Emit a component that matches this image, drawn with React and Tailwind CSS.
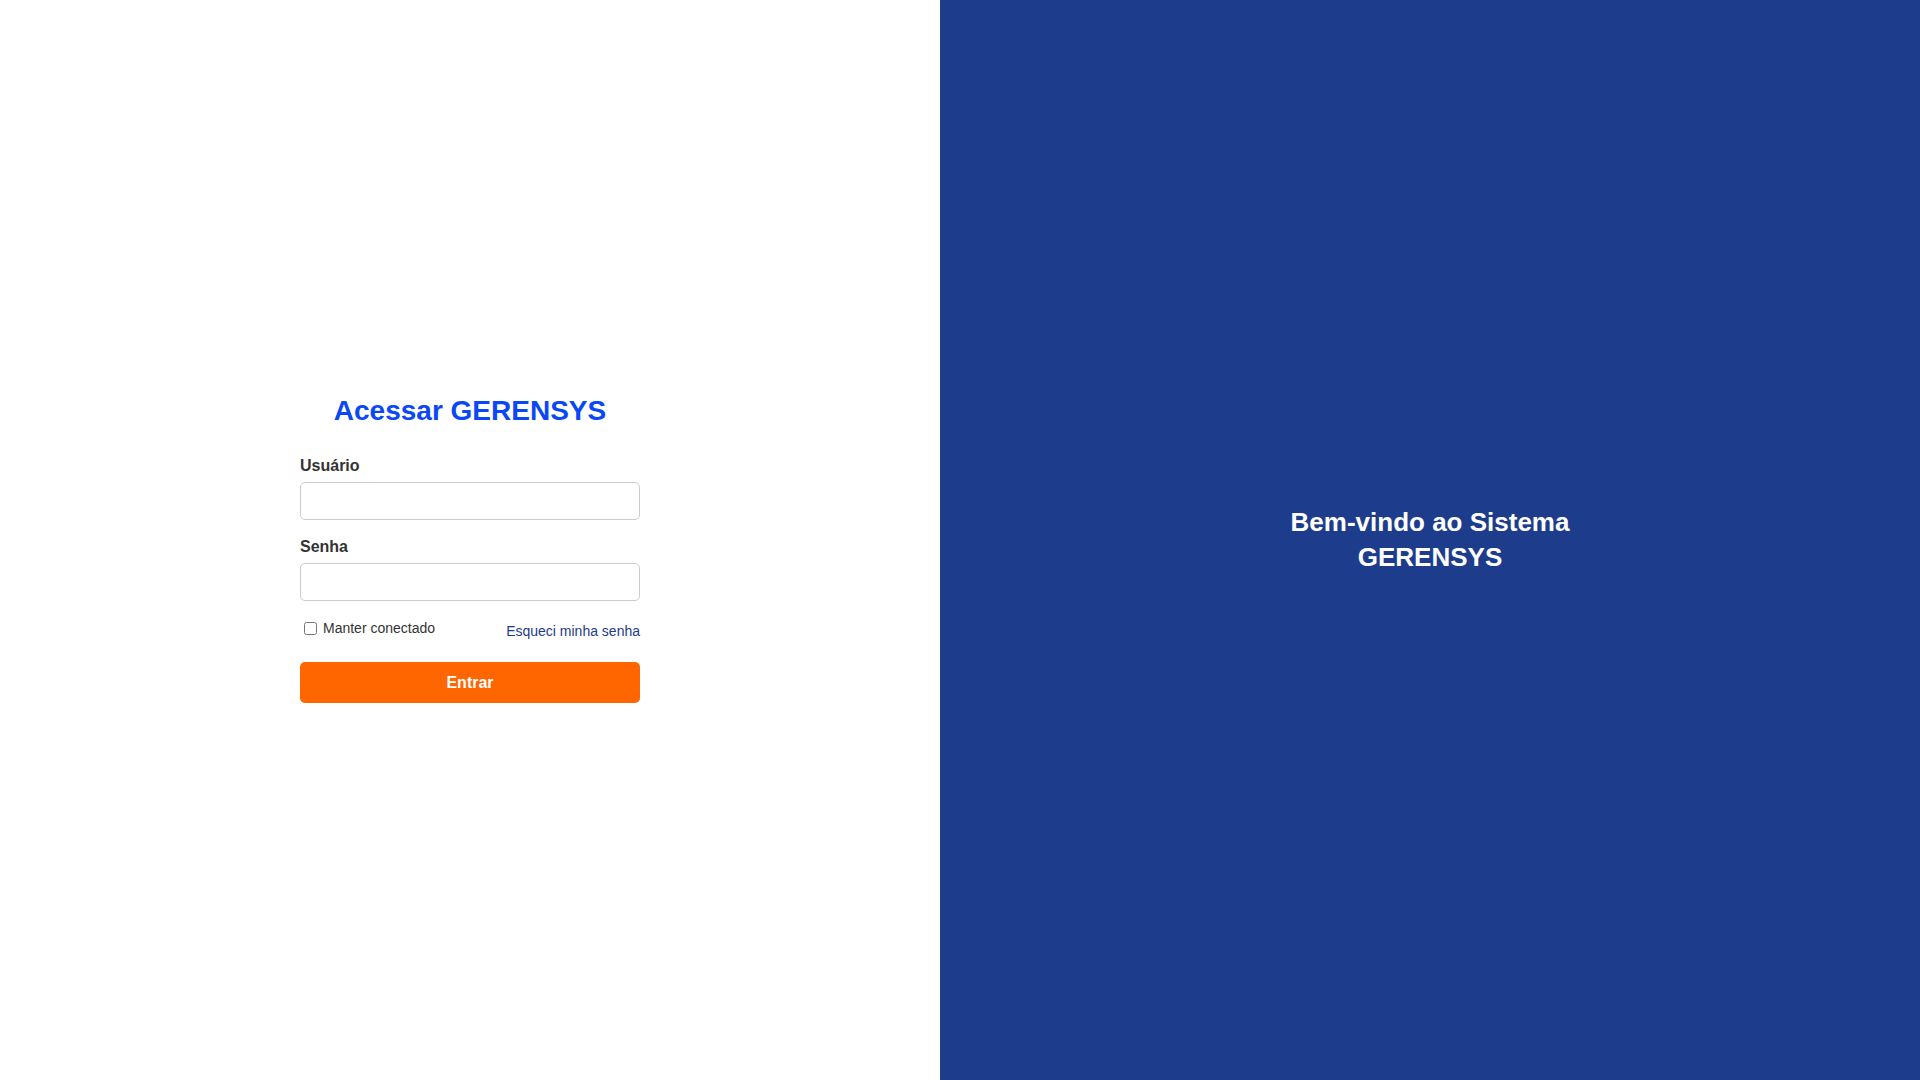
import React, { useState } from "react";

export default function App() {
    const [usuario, setUsuario] = useState("");
    const [senha, setSenha] = useState("");
    const [manter, setManter] = useState(false);

    return (
        <div className="flex h-screen w-full font-['Liberation_Sans',Arial,sans-serif]">
            {/* lado do formulario */}
            <div className="flex w-[940px] items-center justify-center bg-white pt-[18px]">
                <form className="flex w-[340px] flex-col" onSubmit={(e) => e.preventDefault()}>
                    <h2 className="text-center text-[28px] font-bold leading-8 text-[#0a47f7]">
                        Acessar GERENSYS
                    </h2>

                    <label className="mt-[30px] text-[16px] font-bold leading-[18px] text-[#333]">
                        Usuário
                    </label>
                    <input
                        type="text"
                        value={usuario}
                        onChange={(e) => setUsuario(e.target.value)}
                        className="mt-[7px] h-[38px] w-full rounded-[5px] border border-[#ccc] px-[10px] text-[14px] outline-none"
                    />

                    <label className="mt-[18px] text-[16px] font-bold leading-[18px] text-[#333]">
                        Senha
                    </label>
                    <input
                        type="password"
                        value={senha}
                        onChange={(e) => setSenha(e.target.value)}
                        className="mt-[7px] h-[38px] w-full rounded-[5px] border border-[#ccc] px-[10px] text-[14px] outline-none"
                    />

                    <div className="mt-[18px] flex items-start justify-between">
                        <label className="flex items-center text-[14px] leading-[18px] text-[#333]">
                            <input
                                type="checkbox"
                                checked={manter}
                                onChange={(e) => setManter(e.target.checked)}
                                className="ml-[4px] mr-[6px] h-[13px] w-[13px]"
                            />
                            Manter conectado
                        </label>
                        <a href="#" className="pt-[3px] text-[14px] leading-[18px] text-[#1e3a8a]">
                            Esqueci minha senha
                        </a>
                    </div>

                    <button
                        type="submit"
                        className="mt-[22px] h-[41px] w-full rounded-[5px] bg-[#ff6600] text-[16px] font-bold text-white"
                    >
                        Entrar
                    </button>
                </form>
            </div>

            {/* lado de boas-vindas */}
            <div className="flex flex-1 items-center justify-center bg-[#1e3c8c]">
                <h1 className="max-w-[300px] text-center text-[26px] font-bold leading-[35px] text-white">
                    Bem-vindo ao Sistema GERENSYS
                </h1>
            </div>
        </div>
    );
}
